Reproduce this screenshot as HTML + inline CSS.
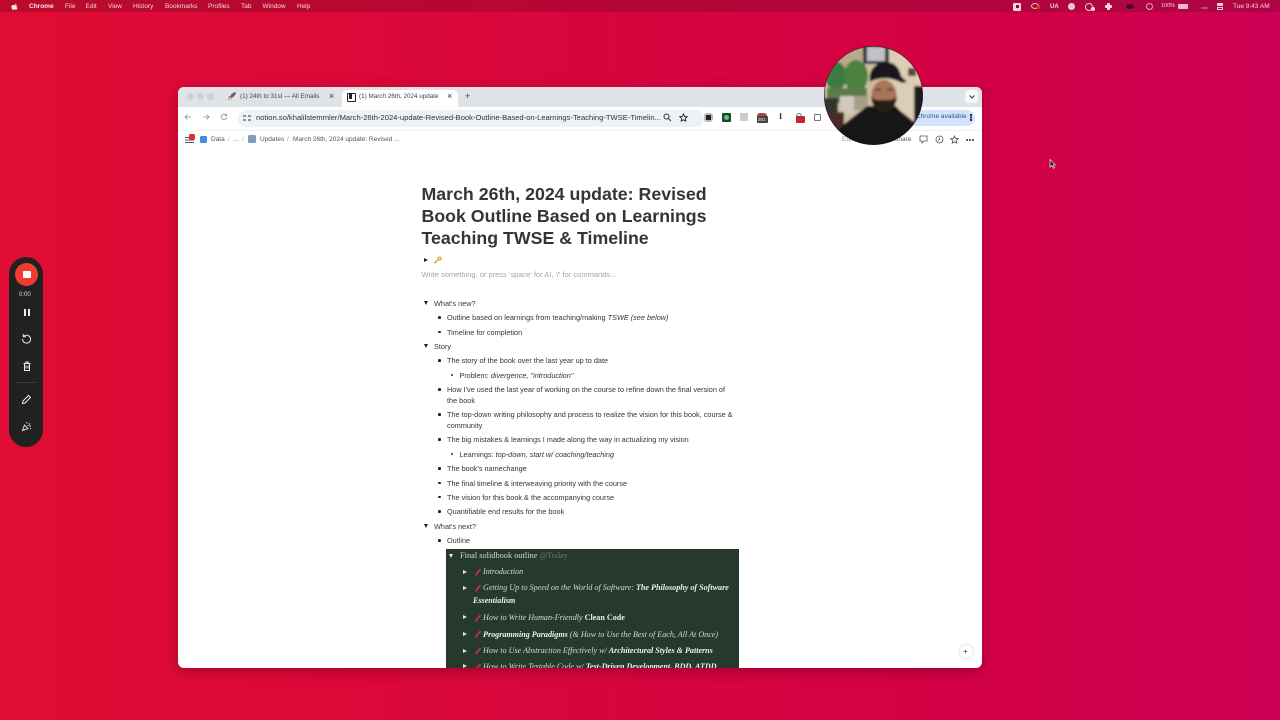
<!DOCTYPE html>
<html><head><meta charset="utf-8"><style>
html,body{margin:0;padding:0;width:1280px;height:720px;overflow:hidden}
body{position:relative;background:linear-gradient(90deg,#e00c33 0%,#d9063b 40%,#d10047 80%,#cc0054 100%);font-family:"Liberation Sans","Noto Sans CJK SC",sans-serif}
.t{position:absolute;white-space:nowrap;line-height:1}
#bar{position:absolute;left:0;top:0;width:1280px;height:12px;background:linear-gradient(90deg,#bb0a2c,#b3053a 60%,#ae0544)}
.m{font-size:6.5px;color:#f4d5da;top:3.5px}
#win{position:absolute;left:178px;top:87px;width:804px;height:581px;background:#fff;border-radius:6px;overflow:hidden;box-shadow:0 3px 12px rgba(90,0,30,.45)}
.w{position:absolute;left:0;white-space:nowrap;line-height:1}
#doc{position:absolute;left:0;top:1px;width:804px;height:580px}
.b{font-size:7.3px;color:#37352f}
.dot{position:absolute;width:2.6px;height:2.6px;border-radius:50%;background:#222}
.tri{position:absolute;width:0;height:0;border-left:2.5px solid transparent;border-right:2.5px solid transparent;border-top:4px solid #222}
.tr{position:absolute;width:0;height:0;border-top:2.5px solid transparent;border-bottom:2.5px solid transparent;border-left:4px solid #222}
.s{font-family:"Liberation Serif",serif;font-size:8.1px;color:#d3dad3;position:absolute;white-space:nowrap;line-height:1;font-style:italic}
.s b{color:#eef1ed}
.pin{position:absolute;width:1.5px;height:8px;background:#b8323f;transform:rotate(40deg)}
</style></head><body>
<div id="bar"></div>
<svg style="position:absolute;left:11px;top:2.500px" width="7" height="7" viewBox="0 0 10 10"><path d="M7 .5C6 .6 5 1.500 5.100 2.500 6.200 2.500 7 1.600 7 .5ZM5 3C4 3 3.500 2.600 2.800 2.600 1.500 2.700.5 3.900.5 5.500c0 2 1.300 4.300 2.500 4.300.7 0 1.100-.5 2-.5s1.200.5 2 .5c1 0 1.900-1.500 2.300-2.700-1-.5-1.500-1.200-1.500-2.200 0-.9.500-1.600 1.200-2.100C8.500 2.900 7.700 2.600 7 2.600 6.200 2.600 5.600 3 5 3Z" fill="#f6e2e5"/></svg>
<div class="t m" style="left:29px;font-weight:bold;color:#fbe9ec">Chrome</div>
<div class="t m" style="left:65px">File</div>
<div class="t m" style="left:85.500px">Edit</div>
<div class="t m" style="left:108px">View</div>
<div class="t m" style="left:133px">History</div>
<div class="t m" style="left:165px">Bookmarks</div>
<div class="t m" style="left:208px">Profiles</div>
<div class="t m" style="left:241px">Tab</div>
<div class="t m" style="left:262.500px">Window</div>
<div class="t m" style="left:297px">Help</div>
<!-- right menu -->
<div style="position:absolute;left:1013px;top:2.500px;width:8px;height:8px;background:#f2d6dc;border-radius:1px"></div>
<div style="position:absolute;left:1015.500px;top:5px;width:3px;height:3px;background:#7a1030"></div>
<div style="position:absolute;left:1031px;top:3px;width:8px;height:6px;border:1px solid #e6b9c3;border-radius:50%;box-sizing:border-box"></div>
<div style="position:absolute;left:1037px;top:6px;width:3px;height:3px;background:#e03020"></div>
<div class="t m" style="left:1050px;font-size:6px;top:3.500px;font-weight:bold">UA</div>
<div style="position:absolute;left:1068px;top:2.500px;width:7px;height:7px;border-radius:50%;background:#ecc5cf;border:1px solid #f0d3da;box-sizing:border-box"></div>
<div style="position:absolute;left:1085px;top:2.500px;width:8px;height:8px;border:1px solid #ecc5cf;border-radius:50%;box-sizing:border-box"></div>
<div style="position:absolute;left:1091px;top:6.500px;width:4px;height:4px;border-radius:50%;background:#f4e0e5"></div>
<div style="position:absolute;left:1105px;top:4.500px;width:7px;height:3.500px;background:#f4d9e0;border-radius:1px"></div>
<div style="position:absolute;left:1107px;top:2.500px;width:3px;height:7.500px;background:#f4d9e0;border-radius:1px"></div>
<div style="position:absolute;left:1126px;top:4px;width:8px;height:5px;border-radius:50%;background:#4a0820"></div>
<div style="position:absolute;left:1146px;top:3px;width:7px;height:7px;border:1px solid #e2a9b8;border-radius:50%;box-sizing:border-box"></div>
<div class="t m" style="left:1161px;font-size:5.500px;top:3.500px">100%</div>
<div style="position:absolute;left:1178px;top:4px;width:10px;height:5px;background:#e8bcc8;border-radius:1px"></div>
<div style="position:absolute;left:1201px;top:7px;width:7px;height:2px;background:#b94a6c"></div>
<div style="position:absolute;left:1217px;top:3px;width:6px;height:3px;background:#f0d0d8"></div>
<div style="position:absolute;left:1217px;top:7px;width:6px;height:3px;border:.5px solid #f0d0d8;box-sizing:border-box"></div>
<div class="t m" style="left:1233px">Tue 9:43 AM</div>

<!-- recorder -->
<div style="position:absolute;left:9px;top:257px;width:34px;height:190px;border-radius:17px;background:#212121"></div>
<div style="position:absolute;left:15px;top:262.500px;width:23px;height:23px;border-radius:50%;background:#ee3d2e"></div>
<div style="position:absolute;left:23px;top:270.500px;width:7.500px;height:7.500px;background:#fff;border-radius:1px"></div>
<div class="t" style="left:19px;top:292px;font-size:6px;color:#ddd">0:00</div>
<div style="position:absolute;left:24px;top:309px;width:2px;height:7px;background:#eee"></div>
<div style="position:absolute;left:27.500px;top:309px;width:2px;height:7px;background:#eee"></div>
<svg style="position:absolute;left:21px;top:333px" width="11" height="11" viewBox="0 0 11 11" fill="none" stroke="#e8e8e8" stroke-width="1"><path d="M2.500 3.500A4 4 0 1 1 1.500 6M2.300 1v2.700H5"/></svg>
<svg style="position:absolute;left:22px;top:361px" width="10" height="10" viewBox="0 0 10 10" fill="none" stroke="#e8e8e8" stroke-width="1"><path d="M1.500 2.500h7M3.800 2.500V1h2.400v1.500M2.500 2.500v7h5v-7M4 4.500v3M6 4.500v3"/></svg>
<div style="position:absolute;left:17px;top:382px;width:19px;height:1px;background:#3c3c3c"></div>
<svg style="position:absolute;left:21px;top:394px" width="11" height="11" viewBox="0 0 11 11" fill="none" stroke="#eee" stroke-width="1"><path d="M1.500 9.500l.5-2.500 5.500-5.500 2 2L4 9z"/></svg>
<svg style="position:absolute;left:21px;top:421px" width="11" height="11" viewBox="0 0 11 11" fill="none" stroke="#ddd" stroke-width="1"><path d="M1.500 9.500l2-5.500 3.500 3.500zM6 1v1.500M9 2.500L8 3.500M8 5h2M9 7.500h1M6.500 4.500h1"/></svg>

<!-- window -->
<div id="win">
 <div style="position:absolute;left:0;top:0;width:804px;height:20px;background:#dfe3e8"></div>
 <div style="position:absolute;left:9px;top:6px;width:7px;height:7px;border-radius:50%;background:#cdd0d4"></div>
 <div style="position:absolute;left:19px;top:6px;width:7px;height:7px;border-radius:50%;background:#cdd0d4"></div>
 <div style="position:absolute;left:29px;top:6px;width:7px;height:7px;border-radius:50%;background:#cdd0d4"></div>
 <svg style="position:absolute;left:49px;top:4px" width="10" height="10" viewBox="0 0 10 10"><path d="M9 1C6 1.500 4 3 3 6l1 1c3-1 4.500-3 5-6z" fill="#6a5a60"/><path d="M3 5L1 6l2 1zM5 7l-1 2 1-.500z" fill="#d44"/><path d="M3 7L1 9" stroke="#e85" stroke-width="1"/></svg>
 <div class="w" style="left:62px;top:6px;font-size:6.300px;line-height:8px;color:#444">(1) 24th to 31st — All Emails</div>
 <div class="w" style="left:151px;top:4.500px;font-size:9px;color:#333">×</div>
 <div style="position:absolute;left:164px;top:3px;width:116px;height:17px;background:#fff;border-radius:5px 5px 0 0"></div>
 <div style="position:absolute;left:169px;top:5.500px;width:7px;height:7px;background:#fff;border:1px solid #222;border-radius:1px"></div>
 <div style="position:absolute;left:171px;top:7px;width:3px;height:4.500px;background:#222"></div>
 <div class="w" style="left:181px;top:5px;font-size:6.300px;line-height:9px;color:#444;width:82px;overflow:hidden">(1) March 26th, 2024 update</div>
 <div class="w" style="left:269px;top:4.500px;font-size:9px;color:#333">×</div>
 <div class="w" style="left:287px;top:4px;font-size:9px;line-height:11px;color:#444">+</div>
 <div style="position:absolute;left:787px;top:3px;width:13px;height:13px;border-radius:4px;background:#f7f8f9"></div>
 <svg style="position:absolute;left:791px;top:8px" width="6" height="4"><path d="M.500.500L3 3l2.500-2.500" fill="none" stroke="#333"/></svg>

 <!-- toolbar -->
 <div style="position:absolute;left:0;top:20px;width:804px;height:23px;background:#fff"></div>
 <svg style="position:absolute;left:6px;top:26px" width="8" height="8" viewBox="0 0 8 8" fill="none" stroke="#8a8d91" stroke-width=".8"><path d="M7 4H1M3.500 1.500L1 4l2.500 2.500"/></svg>
 <svg style="position:absolute;left:24px;top:26px" width="8" height="8" viewBox="0 0 8 8" fill="none" stroke="#8a8d91" stroke-width=".8"><path d="M1 4h6M4.500 1.500L7 4 4.500 6.500"/></svg>
 <svg style="position:absolute;left:42px;top:26px" width="8" height="8" viewBox="0 0 8 8" fill="none" stroke="#8a8d91" stroke-width=".8"><path d="M6.800 4A2.800 2.800 0 1 1 6 2M6.500.800V2.500H4.800"/></svg>
 <div style="position:absolute;left:60px;top:22.500px;width:457px;height:17px;background:#eef1f6;border-radius:9px 0 0 9px"></div>
 <div style="position:absolute;left:517px;top:22.500px;width:9px;height:17px;background:#eef1f6;border-radius:0 9px 9px 0"></div>
 <svg style="position:absolute;left:65px;top:27px" width="8" height="8" viewBox="0 0 8 8" stroke="#333" stroke-width=".9"><path d="M0 2h3M5 2h3M0 6h3M5 6h3"/></svg>
 <div class="w" style="left:78px;top:27px;font-size:7.600px;color:#333">notion.so/khalilstemmler/March-26th-2024-update-Revised-Book-Outline-Based-on-Learnings-Teaching-TWSE-Timelin...</div>
 <svg style="position:absolute;left:485px;top:26px" width="9" height="9" viewBox="0 0 9 9" fill="none" stroke="#333" stroke-width="1"><circle cx="3.500" cy="3.500" r="2.500"/><path d="M5.500 5.500L8 8"/></svg>
 <svg style="position:absolute;left:501px;top:26px" width="9" height="9" viewBox="0 0 10 10" fill="none" stroke="#222" stroke-width="1"><path d="M5 1l1.200 2.700 3 .3-2.300 2 .7 3L5 7.500 2.400 9l.7-3L.800 4l3-.3z"/></svg>
 <div style="position:absolute;left:526px;top:26px;width:9px;height:9px;background:#bbb;border-radius:3px"></div>
 <div style="position:absolute;left:528px;top:28px;width:5px;height:5px;background:#222"></div>
 <div style="position:absolute;left:544px;top:26px;width:9px;height:9px;background:#134a30;border-radius:1px"></div>
 <div style="position:absolute;left:546px;top:28px;width:5px;height:5px;background:#6cc070;border-radius:50%"></div>
 <div style="position:absolute;left:562px;top:26px;width:8px;height:8px;background:#c9cdd0"></div>
 <div style="position:absolute;left:579px;top:26px;width:10px;height:4px;background:#b04048;border-radius:3px 3px 0 0"></div>
 <div style="position:absolute;left:579px;top:29px;width:11px;height:7px;background:#444;border-radius:1px"></div>
 <div class="w" style="left:580px;top:30.500px;font-size:4.500px;color:#eee">301</div>
 <div class="w" style="left:601px;top:26px;font-size:8px;color:#222;font-weight:bold;font-family:'Liberation Serif',serif">I</div>
 <div style="position:absolute;left:618px;top:26px;width:6px;height:7px;border:1px solid #3a9070;border-radius:50%;box-sizing:border-box"></div>
 <div style="position:absolute;left:618px;top:29px;width:9px;height:7px;background:#c0283a;border-radius:1px"></div>
 <div style="position:absolute;left:636px;top:26.500px;width:7px;height:7px;border:1px solid #777;border-radius:1px;box-sizing:border-box"></div>
 <div style="position:absolute;left:700px;top:22.500px;width:97px;height:16px;background:#d3e3fd;border-radius:8px"></div>
 <div class="w" style="left:738px;top:27px;font-size:6.500px;color:#36558a">Chrome available</div>
 <div style="position:absolute;left:792px;top:27px;width:1.500px;height:1.500px;background:#234;box-shadow:0 2.500px #234,0 5px #234"></div>
 <div style="position:absolute;left:0;top:43px;width:804px;height:1px;background:#eef0f2"></div>

 <!-- notion topbar -->
 <div style="position:absolute;left:7px;top:50px;width:9px;height:1px;background:#555;box-shadow:0 2.500px #555,0 5px #555"></div>
 <div style="position:absolute;left:11px;top:47px;width:6px;height:6px;background:#d8303a;border-radius:1.500px"></div>
 <div style="position:absolute;left:22px;top:49px;width:7px;height:7px;background:#3f8ee0;border-radius:1.500px"></div>
 <div class="w" style="left:33px;top:49.500px;font-size:6.500px;color:#555">Data</div>
 <div class="w" style="left:50px;top:49.500px;font-size:6.500px;color:#aaa">/</div>
 <div class="w" style="left:55px;top:49.500px;font-size:6.500px;color:#666">...</div>
 <div class="w" style="left:64px;top:49.500px;font-size:6.500px;color:#aaa">/</div>
 <div style="position:absolute;left:70px;top:48px;width:8px;height:8px;background:#7f9cc0;border-radius:1.500px"></div>
 <div class="w" style="left:82px;top:49.500px;font-size:6.500px;color:#555">Updates</div>
 <div class="w" style="left:109px;top:49.500px;font-size:6.500px;color:#aaa">/</div>
 <div class="w" style="left:115px;top:49.500px;font-size:6.500px;color:#555">March 26th, 2024 update: Revised ...</div>
 <div class="w" style="left:664px;top:49.500px;font-size:6.500px;color:#999">Edit</div>
 <div class="w" style="left:716px;top:49.500px;font-size:6.500px;color:#555">Share</div>
 <svg style="position:absolute;left:741px;top:48px" width="9" height="9" viewBox="0 0 9 9" fill="none" stroke="#555" stroke-width=".8"><path d="M1 1h7v5H5L3 8V6H1z"/></svg>
 <svg style="position:absolute;left:757px;top:48px" width="9" height="9" viewBox="0 0 9 9" fill="none" stroke="#555" stroke-width=".8"><circle cx="4.500" cy="4.500" r="3.500"/><path d="M4.500 2.500v2l-1.500 1"/></svg>
 <svg style="position:absolute;left:772px;top:48px" width="9" height="9" viewBox="0 0 10 10" fill="none" stroke="#555" stroke-width=".9"><path d="M5 1l1.200 2.700 3 .3-2.300 2 .7 3L5 7.500 2.400 9l.7-3L.800 4l3-.3z"/></svg>
 <div style="position:absolute;left:788px;top:51.500px;width:2px;height:2px;border-radius:50%;background:#333;box-shadow:3px 0 #333,6px 0 #333"></div>

 <div id="doc">
 <!-- title -->
 <div class="w" style="left:243.500px;top:98px;font-size:17.750px;font-weight:bold;color:#37352f">March 26th, 2024 update: Revised</div>
 <div class="w" style="left:243.500px;top:120px;font-size:17.750px;font-weight:bold;color:#37352f">Book Outline Based on Learnings</div>
 <div class="w" style="left:243.500px;top:141.500px;font-size:17.750px;font-weight:bold;color:#37352f">Teaching TWSE &amp; Timeline</div>

 <div class="tr" style="left:246px;top:169.500px"></div>
 <svg style="position:absolute;left:255px;top:168px" width="9" height="8" viewBox="0 0 9 8" fill="none" stroke="#d8a838" stroke-width="1.300"><circle cx="6.500" cy="2.500" r="1.500"/><path d="M5.500 3.500L1 7M2 6l1 1"/></svg>
 <div class="w" style="left:243.500px;top:183px;font-size:7.500px;color:#a5a5a3">Write something, or press 'space' for AI, '/' for commands...</div>

 <div class="tri" style="left:245.500px;top:213px"></div><div class="w b" style="left:256px;top:211.500px">What's new?</div>
 <div class="dot" style="left:260px;top:228px"></div><div class="w b" style="left:269px;top:226px">Outline based on learnings from teaching/making <i>TSWE (see below)</i></div>
 <div class="dot" style="left:260px;top:242.500px"></div><div class="w b" style="left:269px;top:240.500px">Timeline for completion</div>
 <div class="tri" style="left:245.500px;top:256px"></div><div class="w b" style="left:256px;top:254.500px">Story</div>
 <div class="dot" style="left:260px;top:271px"></div><div class="w b" style="left:269px;top:269px">The story of the book over the last year up to date</div>
 <div class="dot" style="left:272.500px;top:285.500px;background:none;border:.7px solid #333;box-sizing:border-box"></div><div class="w b" style="left:281.500px;top:283.500px">Problem: <i>divergence, "introduction"</i></div>
 <div class="dot" style="left:260px;top:300px"></div><div class="w b" style="left:269px;top:298px">How I've used the last year of working on the course to refine down the final version of</div>
 <div class="w b" style="left:269px;top:309px">the book</div>
 <div class="dot" style="left:260px;top:325px"></div><div class="w b" style="left:269px;top:323px">The top-down writing philosophy and process to realize the vision for this book, course &amp;</div>
 <div class="w b" style="left:269px;top:334px">community</div>
 <div class="dot" style="left:260px;top:350px"></div><div class="w b" style="left:269px;top:348px">The big mistakes &amp; learnings I made along the way in actualizing my vision</div>
 <div class="dot" style="left:272.500px;top:364.500px;background:none;border:.7px solid #333;box-sizing:border-box"></div><div class="w b" style="left:281.500px;top:362.500px">Learnings: <i>top-down, start w/ coaching/teaching</i></div>
 <div class="dot" style="left:260px;top:379px"></div><div class="w b" style="left:269px;top:377px">The book's namechange</div>
 <div class="dot" style="left:260px;top:393.500px"></div><div class="w b" style="left:269px;top:391.500px">The final timeline &amp; interweaving priority with the course</div>
 <div class="dot" style="left:260px;top:407.500px"></div><div class="w b" style="left:269px;top:405.500px">The vision for this book &amp; the accompanying course</div>
 <div class="dot" style="left:260px;top:422px"></div><div class="w b" style="left:269px;top:420px">Quantifiable end results for the book</div>
 <div class="tri" style="left:245.500px;top:436px"></div><div class="w b" style="left:256px;top:434.500px">What's next?</div>
 <div class="dot" style="left:260px;top:451px"></div><div class="w b" style="left:269px;top:449px">Outline</div>
 </div>

 <!-- dark block -->
 <div style="position:absolute;left:268px;top:462px;width:293px;height:119px;background:#253a2c;overflow:hidden">
  <div class="tri" style="left:3px;top:4.500px;border-top-color:#e8ece8"></div>
  <div class="s" style="left:14px;top:2.500px;font-style:normal;font-size:8.350px">Final solidbook outline <span style="color:#66786a">@Today</span></div>
  <div class="tr" style="left:16.500px;top:20.500px;border-left-color:#dfe5df"></div><div class="pin" style="left:30.500px;top:19px"></div>
  <div class="s" style="left:37px;top:19px">Introduction</div>
  <div class="tr" style="left:16.500px;top:36.500px;border-left-color:#dfe5df"></div><div class="pin" style="left:30.500px;top:35px"></div>
  <div class="s" style="left:37px;top:35px">Getting Up to Speed on the World of Software: <b>The Philosophy of Software</b></div>
  <div class="s" style="left:27px;top:48px"><b>Essentialism</b></div>
  <div class="tr" style="left:16.500px;top:66px;border-left-color:#dfe5df"></div><div class="pin" style="left:30.500px;top:65px"></div>
  <div class="s" style="left:37px;top:65px">How to Write Human-Friendly <b style="font-style:normal">Clean Code</b></div>
  <div class="tr" style="left:16.500px;top:83px;border-left-color:#dfe5df"></div><div class="pin" style="left:30.500px;top:81px"></div>
  <div class="s" style="left:37px;top:81.500px"><b>Programming Paradigms</b> (&amp; How to Use the Best of Each, All At Once)</div>
  <div class="tr" style="left:16.500px;top:99.500px;border-left-color:#dfe5df"></div><div class="pin" style="left:30.500px;top:98px"></div>
  <div class="s" style="left:37px;top:98px">How to Use Abstraction Effectively w/ <b>Architectural Styles &amp; Patterns</b></div>
  <div class="tr" style="left:16.500px;top:115px;border-left-color:#dfe5df"></div><div class="pin" style="left:30.500px;top:114px"></div>
  <div class="s" style="left:37px;top:114px">How to Write Testable Code w/ <b>Test-Driven Development, BDD, ATDD</b></div>
 </div>
 <div style="position:absolute;left:782px;top:558px;width:13px;height:13px;border-radius:50%;background:#fff;box-shadow:0 0 3px rgba(0,0,0,.2)"></div>
 <div class="w" style="left:785px;top:560.500px;font-size:8px;color:#333">+</div>
</div>

<!-- webcam -->
<svg style="position:absolute;left:824px;top:46px" width="100" height="100" viewBox="0 0 100 100">
 <defs><clipPath id="c"><circle cx="49.500" cy="49.500" r="49"/></clipPath>
 <filter id="bl"><feGaussianBlur stdDeviation="1"/></filter></defs>
 <circle cx="49.500" cy="49.500" r="49.500" fill="#1d1b1b"/>
 <g clip-path="url(#c)"><g filter="url(#bl)">
  <rect width="100" height="100" fill="#cdbda2"/>
  <rect x="62" y="0" width="38" height="80" fill="#dccdb5"/>
  <rect x="0" y="0" width="40" height="20" fill="#b9a98c"/>
  <rect x="39" y="-2" width="26" height="20" fill="#36363a"/>
  <rect x="43" y="1" width="18" height="14" fill="#bfc2c6"/>
  <ellipse cx="12" cy="30" rx="11" ry="14" fill="#3c7a42"/>
  <ellipse cx="32" cy="30" rx="12" ry="16" fill="#4c8240"/>
  <rect x="3" y="42" width="40" height="15" fill="#5b7a48"/>
  <rect x="16" y="50" width="14" height="18" fill="#cfcabc"/>
  <rect x="30" y="50" width="14" height="14" fill="#a89e88"/>
  <rect x="0" y="52" width="14" height="14" fill="#34322f"/>
  <rect x="2" y="66" width="18" height="24" fill="#4a2a28"/>
  <rect x="84" y="22" width="8" height="8" fill="#5a4a3a"/>
  <rect x="90" y="40" width="10" height="40" fill="#1d1a1a"/>
  <path d="M8 100C12 80 24 76 43 60L72 60C76 66 84 70 90 76 94 84 96 92 96 100Z" fill="#181819"/>
  <ellipse cx="60" cy="49" rx="12.500" ry="15" fill="#a8745a"/>
  <path d="M47 50C48 62 54 66 60 66 66 66 72 62 73 50 69 55 65 54 60 54 55 54 51 55 47 50Z" fill="#2a1d18"/>
  <path d="M46 36C44 24 52 16 62 16 70 16 76 22 77 30L83 36 78 37C70 32 56 30 46 36Z" fill="#14161c"/>
  <rect x="51" y="43" width="6" height="1.500" fill="#2a1d18"/><rect x="63" y="43" width="6" height="1.500" fill="#2a1d18"/>
 </g></g>
</svg>

<!-- cursor -->
<svg style="position:absolute;left:1049px;top:159px" width="7" height="10" viewBox="0 0 7 10"><path d="M1 .5V8l2-1.500 1.300 2.800 1.200-.6L4.300 6H6.500z" fill="#222" stroke="#fff" stroke-width=".6"/></svg>
</body></html>
